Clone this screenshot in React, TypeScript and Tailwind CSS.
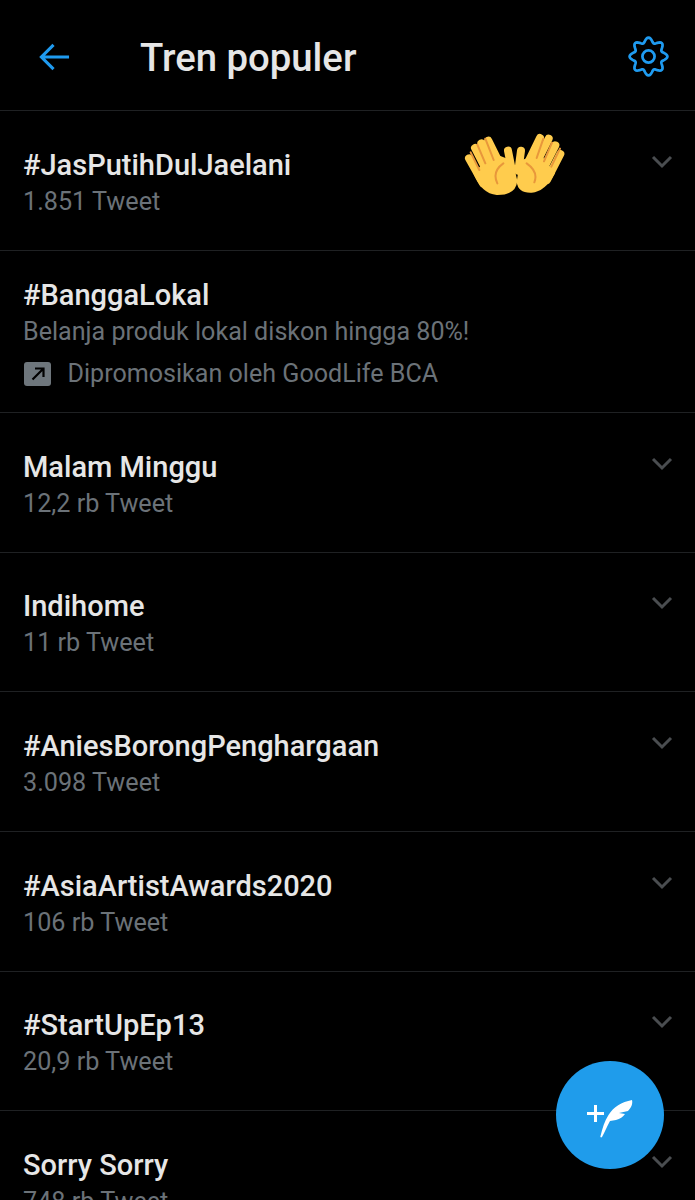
const trends = [
  { title: '#JasPutihDulJaelani', sub: '1.851 Tweet' },
  { title: '#BanggaLokal', promo: true },
  { title: 'Malam Minggu', sub: '12,2 rb Tweet' },
  { title: 'Indihome', sub: '11 rb Tweet' },
  { title: '#AniesBorongPenghargaan', sub: '3.098 Tweet' },
  { title: '#AsiaArtistAwards2020', sub: '106 rb Tweet' },
  { title: '#StartUpEp13', sub: '20,9 rb Tweet' },
  { title: 'Sorry Sorry', sub: '748 rb Tweet' },
];

// wavy 8-lobe outline of the settings gear
const gearPath =
  Array.from({ length: 120 }, (_, i) => {
    const a = (i / 120) * Math.PI * 2;
    const r = 16.8 + 2.5 * Math.cos(8 * a);
    const x = 24 + r * Math.cos(a - Math.PI / 2);
    const y = 24 + r * Math.sin(a - Math.PI / 2);
    return `${i === 0 ? 'M' : 'L'}${x.toFixed(2)} ${y.toFixed(2)}`;
  }).join(' ') + ' Z';

function Chevron() {
  return (
    <svg width="22" height="14" viewBox="0 0 22 14" fill="none" stroke="#4a4d50" strokeWidth="3">
      <path d="M2 2l9 9 9-9" />
    </svg>
  );
}

function Hands() {
  return (
    <svg width="140" height="90" viewBox="0 0 420 270">
      <g fill="none" stroke="#FFCC4D" strokeLinecap="round" strokeWidth="24">
        <path d="M87 115l42 75M105 84l47 91M124 70l43 90M145 62l42 85M204 92l12 60" />
        <path d="M361 102l-40 78M346 76l-43 84M326 56l-42 84M300 54l-38 78M243 92l-8 60" />
      </g>
      <path fill="#FFCC4D" d="M100 160Q125 222 170 225Q228 226 232 182L218 122L160 100Z" />
      <path fill="#FFCC4D" d="M345 160Q315 216 275 218Q234 220 230 185L240 122L300 100Z" />
      <path
        fill="none"
        stroke="#E8973B"
        strokeWidth="6"
        strokeLinecap="round"
        d="M92 97l26 53M112 74l24 56M136 56l25 64M172 190Q155 155 190 130M310 56l-20 58M336 68l-24 56M360 86l-26 54M283 187Q296 155 260 130"
      />
    </svg>
  );
}

export default function App() {
  return (
    <div className="relative h-[1200px] w-[695px] overflow-hidden bg-black font-['Roboto',sans-serif]">
      <header className="flex h-[111.300px] items-center border-b border-[#1f2123] pt-[3px]">
        <svg className="ml-[39px]" width="31" height="32" viewBox="0 0 32 32" fill="none" stroke="#1f9bf0" strokeWidth="3.2">
          <path d="M31 16H3M15 3.500L2.500 16 15 28.500" />
        </svg>
        <h1 className="mt-[2px] ml-[70px] text-[38.300px] leading-none font-medium text-[#e6e6e6]">Tren populer</h1>
        <svg className="mr-[23.500px] ml-auto" width="47" height="47" viewBox="0 0 48 48" fill="none" stroke="#1f9bf0" strokeWidth="2.800">
          <path d={gearPath} />
          <circle cx="24" cy="24" r="6.200" />
        </svg>
      </header>

      {trends.map((t) => (
        <div
          key={t.title}
          className={`flex items-start justify-between border-b border-[#1f2123] pr-[22px] pl-[23px] ${t.promo ? 'h-[162px] pt-[27px]' : 'h-[139.700px] pt-[36.700px]'}`}
        >
          <div>
            <div className="text-[29px] leading-[34px] font-medium text-[#e6e6e6]">{t.title}</div>
            {t.sub && <div className="mt-[3px] text-[25.200px] leading-[34px] text-[#6b7278]">{t.sub}</div>}
            {t.promo && (
              <>
                <div className="mt-[3.500px] text-[25.100px] leading-[34px] text-[#6b7278]">
                  Belanja produk lokal diskon hingga 80%!
                </div>
                <div className="mt-[7.500px] flex items-center text-[25.100px] leading-[34px] text-[#6b7278]">
                  <span className="ml-px flex h-6 w-[27px] items-center justify-center rounded-[3px] bg-[#6e767c]">
                    <svg width="16" height="16" viewBox="0 0 16 16" fill="none" stroke="#000" strokeWidth="2.200">
                      <path d="M2.500 13.500L13 3M5 2.500h8.500V11" />
                    </svg>
                  </span>
                  <span className="ml-[16.500px]">Dipromosikan oleh GoodLife BCA</span>
                </div>
              </>
            )}
          </div>
          {!t.promo && (
            <div className="mt-[7px]">
              <Chevron />
            </div>
          )}
        </div>
      ))}

      <div className="absolute top-[120px] left-[440px]">
        <Hands />
      </div>

      <button className="absolute top-[1061px] left-[556px] flex h-[108px] w-[108px] items-center justify-center rounded-full bg-[#1f9ceb]">
        <svg width="52" height="48" viewBox="0 0 52 48">
          <path d="M3 22.500h17M11.500 14v17" stroke="#fff" strokeWidth="3" fill="none" />
          <path
            fill="#fff"
            d="M48 9c1 4-1 8-4 11l-9 2 6 1c-2 3-5 5-9 6l-6 1c-3 5-5 11-8 16-1 1-2 0-1.500-1 2-8 4-15 8-21 5-8 13-13 23.500-15z"
          />
        </svg>
      </button>
    </div>
  );
}
